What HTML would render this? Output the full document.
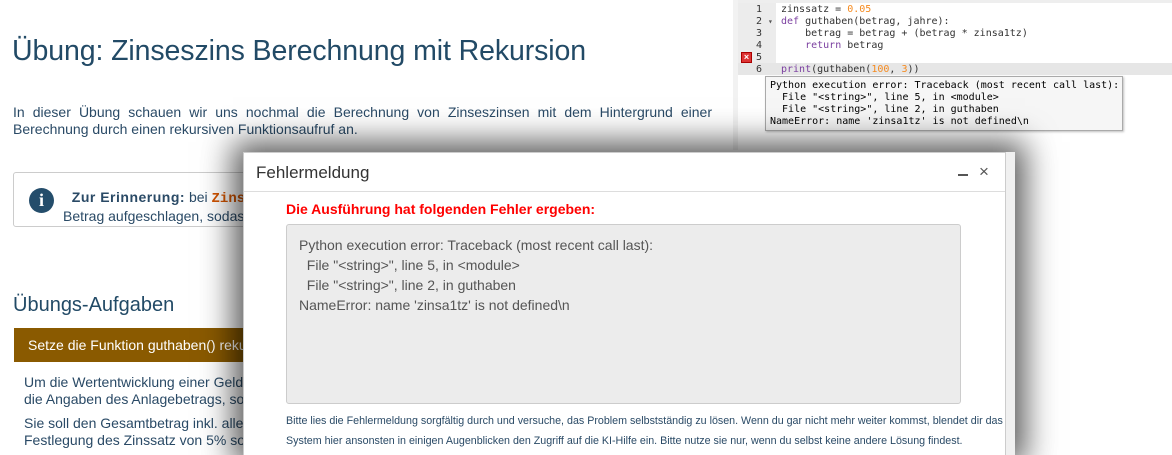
<!DOCTYPE html>
<html><head><meta charset="utf-8"><style>
*{margin:0;padding:0;box-sizing:border-box}
html,body{width:1172px;height:455px;overflow:hidden}
body{background:#fff;font-family:"Liberation Sans",sans-serif;position:relative}
.a{position:absolute}
h1{position:absolute;left:12px;top:35px;font-size:28.5px;font-weight:normal;color:#224a66;letter-spacing:-0.1px}
.intro{left:13px;top:104px;width:699px;font-size:14px;line-height:17px;color:#2a4a66;text-align:justify}
.note{left:13px;top:172px;width:720px;height:55px;border:1px solid #ccc;border-radius:3px}
.note .ic{position:absolute;left:15px;top:15px;width:25px;height:25px;border-radius:50%;background:#244d6b;color:#fff;font:bold 18px "Liberation Serif",serif;text-align:center;line-height:25px}
.note .t{position:absolute;left:49px;top:16px;font-size:14px;line-height:17px;color:#2a4a66}
h2{position:absolute;left:13px;top:294px;font-size:20px;font-weight:normal;color:#224a66}
.bar{left:14px;top:328px;width:720px;height:34px;background:#8a5a00;color:#fff;font-size:14px;line-height:34px;padding-left:14px}
.p{left:24px;font-size:14px;line-height:17px;color:#2a4a66;width:690px;text-align:justify}
.code{left:738px;top:0;width:434px;height:150px;background:#fff}
.gut{left:738px;top:3px;width:38px;height:72px;background:#ececec}
.ln{font:10px "DejaVu Sans Mono","Liberation Mono",monospace;line-height:12px;white-space:pre}
.tip{left:765px;top:76px;width:358px;height:55px;background:#f6f6f6;border:1px solid #aaa;box-shadow:1px 1px 2px rgba(0,0,0,.25);padding:3px 4px;color:#000}
.dlg{left:243px;top:152px;width:772px;height:303px;background:#f0f0f0;box-shadow:0 0 30px 10px rgba(0,0,0,.65)}
.inner{position:absolute;left:0;top:0;width:763px;height:303px;background:#fff;border:1px solid #ccc;border-bottom:none}
</style></head><body>
<h1>Übung: Zinseszins Berechnung mit Rekursion</h1>
<div class="a intro">In dieser Übung schauen wir uns nochmal die Berechnung von Zinseszinsen mit dem Hintergrund einer Berechnung durch einen rekursiven Funktionsaufruf an.</div>
<div class="a note"><div class="ic">i</div><div class="t"><b style="letter-spacing:.5px">&nbsp;&nbsp;Zur Erinnerung:</b> bei <b style="color:#d35400;font-family:'Liberation Mono',monospace">Zinseszins</b> wird der<br>Betrag aufgeschlagen, sodass</div></div>
<h2>Übungs-Aufgaben</h2>
<div class="a bar">Setze die Funktion guthaben() rekursiv um</div>
<div class="a p" style="top:374px">Um die Wertentwicklung einer Geldanlage zu berechnen<br>die Angaben des Anlagebetrags, sowie</div>
<div class="a p" style="top:415px">Sie soll den Gesamtbetrag inkl. aller<br>Festlegung des Zinssatz von 5% sowie</div>
<div class="a" style="left:733px;top:0;width:5px;height:150px;background:#f2f2f2"></div>
<div class="a code"></div>
<div class="a" style="left:738px;top:0;width:434px;height:3px;background:#eee"></div>
<div class="a gut"></div>
<div class="a" style="left:738px;top:63px;width:434px;height:12px;background:#e6e6e6"></div>
<div class="a ln" style="left:756px;top:4px;color:#333;text-align:right">1
2
3
4
5
6</div>
<div class="a ln" style="left:768px;top:16px;color:#555;font-size:8px">▾</div>
<div class="a" style="left:741px;top:52px;width:11px;height:11px;background:#d33;border:1px solid #a00;color:#fff;font:bold 9px sans-serif;line-height:9px;text-align:center">×</div>
<div class="a ln" style="left:781px;top:4px;color:#333">zinssatz = <span style="color:#f58a1f">0.05</span>
<span style="color:#7b3fa0">def</span> guthaben(betrag, jahre):
    betrag = betrag + (betrag * zinsa1tz)
    <span style="color:#7b3fa0">return</span> betrag

<span style="color:#7b3fa0">print</span>(guthaben(<span style="color:#f58a1f">100</span>, <span style="color:#f58a1f">3</span>))</div>
<div class="a tip ln">Python execution error: Traceback (most recent call last):
  File "&lt;string&gt;", line 5, in &lt;module&gt;
  File "&lt;string&gt;", line 2, in guthaben
NameError: name 'zinsa1tz' is not defined\n</div>
<div class="a dlg"><div class="inner">
<div class="a" style="left:12px;top:10px;font-size:17px;color:#333">Fehlermeldung</div>
<div class="a" style="left:714px;top:21px;width:10px;height:2px;background:#555"></div>
<div class="a" style="left:735px;top:9px;font-size:17px;color:#555">×</div>
<div class="a" style="left:0;top:38px;width:761px;height:1px;background:#ddd"></div>
<div class="a" style="left:42px;top:48px;font-size:14px;font-weight:bold;color:#f00">Die Ausführung hat folgenden Fehler ergeben:</div>
<div class="a" style="left:42px;top:71px;width:675px;height:180px;background:#ececec;border:1px solid #ccc;border-radius:3px;padding:10px 12px;font-size:14px;line-height:20px;color:#555;white-space:pre">Python execution error: Traceback (most recent call last):
  File "&lt;string&gt;", line 5, in &lt;module&gt;
  File "&lt;string&gt;", line 2, in guthaben
NameError: name 'zinsa1tz' is not defined\n</div>
<div class="a" style="left:42px;top:258px;width:720px;font-size:10.7px;line-height:20px;color:#2a4a66">Bitte lies die Fehlermeldung sorgfältig durch und versuche, das Problem selbstständig zu lösen. Wenn du gar nicht mehr weiter kommst, blendet dir das System hier ansonsten in einigen Augenblicken den Zugriff auf die KI-Hilfe ein. Bitte nutze sie nur, wenn du selbst keine andere Lösung findest.</div>
</div></div>
</body></html>
